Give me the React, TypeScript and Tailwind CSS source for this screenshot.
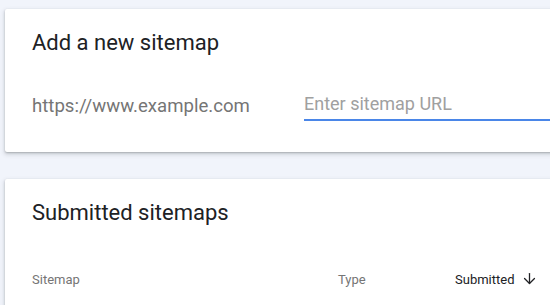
import { ArrowDown } from 'lucide-react';

export default function App() {
  return (
    <div className="w-[550px] h-[305px] overflow-hidden bg-[#f1f4fb] pl-[5px] pt-[9px] font-['Roboto',sans-serif]">
      <div className="w-[560px] h-[143px] bg-white rounded-[2px] shadow-[0_1px_2px_rgba(60,64,67,0.3),0_2px_4px_1px_rgba(60,64,67,0.15)] pl-[27px] pt-[20px]">
        <h2 className="text-[22px] leading-[28px] text-[#202124]">Add a new sitemap</h2>
        <div className="flex items-end mt-[35px]">
          <div className="w-[272px] text-[18.6px] leading-[24px] text-[#757575] pb-[3px]">https://www.example.com</div>
          <div className="flex-1 border-b-2 border-[#4a86e8] pb-[2px]">
            <input
              className="w-full outline-none text-[18px] leading-[24px] placeholder:text-[#a0a0a0] bg-transparent"
              placeholder="Enter sitemap URL"
            />
          </div>
        </div>
      </div>

      <div className="mt-[27px] w-[560px] h-[200px] bg-white rounded-[2px] shadow-[0_1px_2px_rgba(60,64,67,0.3),0_2px_4px_1px_rgba(60,64,67,0.15)] pl-[27px] pt-[20px]">
        <h2 className="text-[22px] leading-[28px] text-[#202124]">Submitted sitemaps</h2>
        <div className="flex items-center mt-[43px] text-[13px] leading-[20px]">
          <div className="w-[306px] text-[#757575]">Sitemap</div>
          <div className="w-[117px] text-[#757575]">Type</div>
          <div className="flex items-center gap-[7px] text-[#202124]">
            Submitted
            <ArrowDown size={17} strokeWidth={1.8} className="-mt-[3px]" />
          </div>
        </div>
      </div>
    </div>
  );
}
